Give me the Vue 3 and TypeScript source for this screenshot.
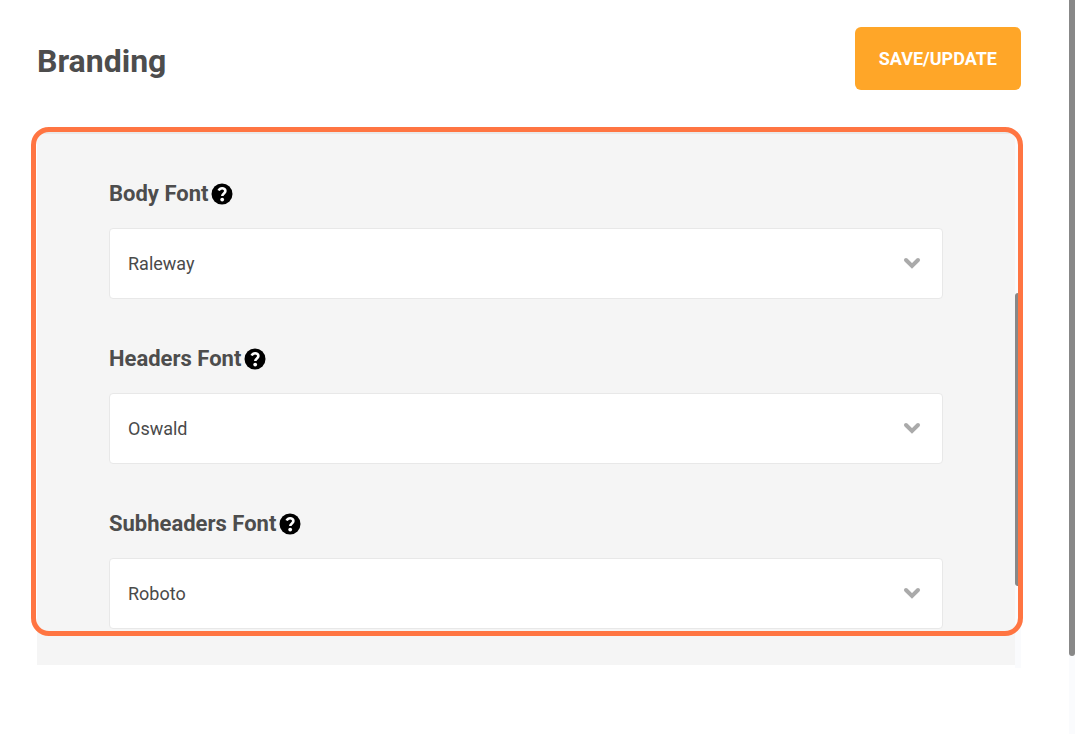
<script setup lang="ts">
import { ref } from 'vue'

interface FontField {
  id: string
  label: string
  value: string
}

const families: string[] = ['Raleway', 'Oswald', 'Roboto']

const fields = ref<FontField[]>([
  { id: 'body-font', label: 'Body Font', value: 'Raleway' },
  { id: 'headers-font', label: 'Headers Font', value: 'Oswald' },
  { id: 'subheaders-font', label: 'Subheaders Font', value: 'Roboto' },
])
</script>

<template>
  <div class="page">
    <main class="content">
      <header class="header">
        <h1>Branding</h1>
        <button type="button" class="save">SAVE/UPDATE</button>
      </header>

      <section class="panel">
        <form class="form" @submit.prevent>
          <div v-for="field in fields" :key="field.id" class="field">
            <div class="caption">
              <label :for="field.id">{{ field.label }}</label>
              <button type="button" class="help" :aria-label="'Help: ' + field.label">
                <svg viewBox="0 0 22 22" aria-hidden="true">
                  <circle cx="11" cy="11" r="10.500" />
                  <path class="hook" d="M7.600 7.500C8.400 5.900 9.500 5.200 11.100 5.200C13 5.200 14.400 6.300 14.400 8C14.400 10.400 11.300 10.400 11.300 13" />
                  <circle class="dot" cx="11.200" cy="16.600" r="1.900" />
                </svg>
              </button>
            </div>
            <div class="picker">
              <select :id="field.id" v-model="field.value">
                <option v-for="family in families" :key="family">{{ family }}</option>
              </select>
              <svg class="chevron" viewBox="0 0 18 12" aria-hidden="true">
                <path d="M3 3 L9 9 L15 3" />
              </svg>
            </div>
          </div>
        </form>
        <div class="rail" aria-hidden="true"><div class="thumb panel-thumb"></div></div>
        <div class="highlight" aria-hidden="true"></div>
      </section>
    </main>
    <div class="rail" aria-hidden="true"><div class="thumb page-thumb"></div></div>
  </div>
</template>

<style>
body {
  margin: 0;
  background: #fff;
}
</style>

<style scoped>
.page {
  display: flex;
  min-height: 100vh;
  color: #4d4d4d;
  font-family: Roboto, "Liberation Sans", sans-serif;
}

.content {
  flex: 1;
  padding: 27px 48px 0 37px;
}

.header {
  display: flex;
  align-items: center;
  justify-content: space-between;
  margin-bottom: 41px;
}

h1 {
  margin: 0;
  padding-top: 4px;
  font-size: 32px;
  line-height: 40px;
  font-weight: 700;
}

.save {
  padding: 20px 24px;
  border: 0;
  border-radius: 6px;
  background: #ffa628;
  color: #fff;
  font-family: inherit;
  font-size: 18px;
  line-height: 23px;
  font-weight: 700;
}

.panel {
  position: relative;
  display: flex;
}

.form {
  flex: 1;
  display: flex;
  flex-direction: column;
  gap: 45px;
  margin-bottom: 3px;
  padding: 45px 72px 36px;
  border-top: 3px solid #e9e9e9;
  background: #f5f5f5;
}

.caption {
  display: flex;
  align-items: center;
  gap: 3px;
  margin-bottom: 19px;
  font-size: 22px;
  line-height: 30px;
  font-weight: 700;
}

.help {
  display: flex;
  padding: 0;
  border: 0;
  background: none;
}

.help svg {
  width: 22px;
  height: 22px;
  fill: #000;
}

.help .hook {
  fill: none;
  stroke: #fff;
  stroke-width: 2.6;
}

.help .dot {
  fill: #fff;
}

.picker {
  position: relative;
}

select {
  display: block;
  width: 100%;
  height: 71px;
  padding: 0 48px 0 18px;
  border: 1px solid #e8e8e8;
  border-radius: 4px;
  appearance: none;
  background: #fff;
  color: #4a4a4a;
  font-family: inherit;
  font-size: 18px;
}

.chevron {
  position: absolute;
  top: 29px;
  right: 22px;
  width: 18px;
  height: 12px;
  fill: none;
  stroke: #aaa;
  stroke-width: 4;
  stroke-linecap: round;
  pointer-events: none;
}

.rail {
  display: flex;
  flex-direction: column;
  width: 6px;
  background: #fafbfd;
}

.thumb {
  border-radius: 3px;
  background: #888;
}

.panel-thumb {
  height: 293px;
  margin-top: 162px;
}

.page-thumb {
  height: 656px;
  border-radius: 0 0 3px 3px;
}

.highlight {
  position: absolute;
  inset: -4px -2px 32px -6px;
  border: 5px solid #ff7542;
  border-radius: 18px;
  pointer-events: none;
}
</style>
